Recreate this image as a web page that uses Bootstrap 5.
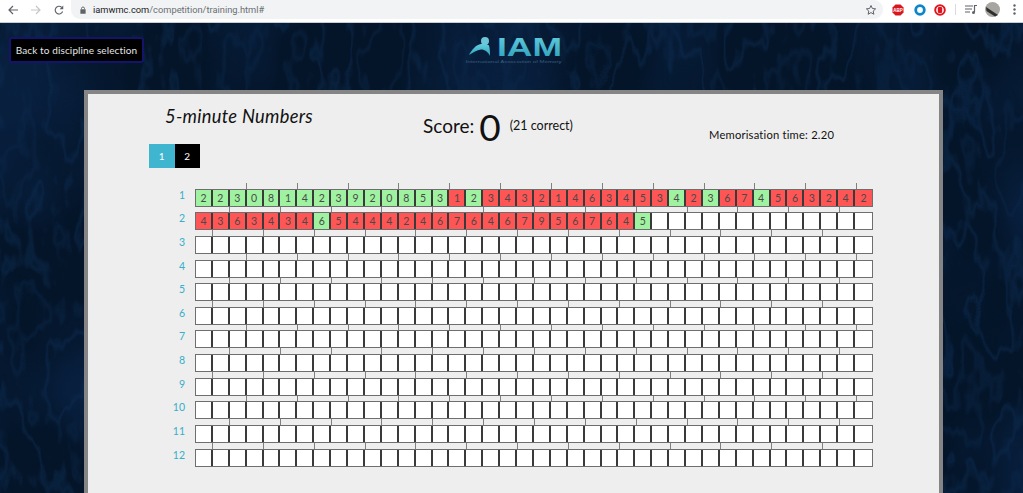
<!DOCTYPE html>
<html lang="en">
<head>
<meta charset="UTF-8">
<meta name="viewport" content="width=device-width, initial-scale=1.0">
<title>5-minute Numbers</title>
<link href="https://cdn.jsdelivr.net/npm/bootstrap@5.3.0/dist/css/bootstrap.min.css" rel="stylesheet">
<style>
  html, body { height: 100%; overflow: hidden; }
  body {
    font-family: "Lato", "Noto Sans", sans-serif;
    background-color: #041529;
    color: #111;
  }

  /* browser toolbar */
  .chrome-bar { height: 23px; background: #fff; border-bottom: 1px solid #c9ccd0; }
  .chrome-nav { width: 71px; height: 19px; flex: none; padding-left: 8px; gap: 13px; }
  .url-pill { width: 812px; flex: none; height: 19px; background: #f1f3f4; border-radius: 0 9px 9px 9px; font: 9.3px "Roboto", sans-serif; color: #6b6f73; padding: 0 6px 0 9px; }
  .url-host { color: #202124; }
  .lock-icon { margin-right: 7px; }
  .chrome-ext { height: 19px; flex: none; padding-left: 9px; }
  .ext-gap { margin-left: 10px; }
  .ext-sep { width: 1px; height: 11px; background: #d8dadd; margin: 0 9px 0 9px; }
  .ext-avatar { margin: 0 8px 0 8px; }
  .ext-dots { margin-left: 5px; }

  /* page */
  .site-bg {
    height: 470px;
    background-color: #041529;
    background-image: url("data:image/svg+xml;utf8,<svg xmlns='http://www.w3.org/2000/svg' width='1023' height='470'><filter id='b' x='0' y='0' width='100%' height='100%' color-interpolation-filters='sRGB'><feTurbulence type='fractalNoise' baseFrequency='0.007 0.005' numOctaves='3' seed='4'/><feColorMatrix values='0 0 0 0 0.035  0 0 0 0 0.13  0 0 0 0 0.26  3 0 0 0 -1.2'/></filter><filter id='v' x='0' y='0' width='100%' height='100%' color-interpolation-filters='sRGB'><feTurbulence type='fractalNoise' baseFrequency='0.022 0.009' numOctaves='4' seed='23'/><feColorMatrix values='0 0 0 0 0.05  0 0 0 0 0.17  0 0 0 0 0.31  1 0 0 0 0'/><feComponentTransfer><feFuncA type='table' tableValues='0 0 0 0 0 0 0 0 0 .55 0 0 0 .4 0 0 0 0 0 0 0'/></feComponentTransfer></filter><rect width='1023' height='470' filter='url(%23b)' opacity='.85'/><rect width='1023' height='470' filter='url(%23v)'/></svg>");
  }
  .site-head { position: relative; height: 67px; padding: 14px 0 0 9px; }
  .back-btn {
    width: 135px; height: 26px;
    background: #000; color: #e6e6e6;
    border: 2px solid #14146b; border-radius: 3px;
    font-size: 10px; letter-spacing: .12px; padding: 0;
  }
  .logo-box { position: absolute; left: 464px; top: 7px; width: 102px; height: 36px; }
  .logo-name { font: 700 25px/1 "Liberation Sans", sans-serif; }
  .logo-sub { font: 4px "Liberation Sans", sans-serif; fill: #3a5c7c; }

  .panel {
    width: 859px; height: 420px;
    margin-left: 84px;
    background: #eee;
    border: 4px solid #858585;
    border-bottom: 0;
  }
  .head-row { height: 50px; padding-left: 77px; }
  .task-title { font-style: italic; font-size: 18.3px; letter-spacing: .3px; margin: 12px 0 0 0; width: 258px; font-weight: 400; flex: none; }
  .score-box { width: 286px; flex: none; padding-top: 14px; }
  .score-word { font-size: 19px; }
  .score-num { font-size: 37px; line-height: 1; margin: 0 9px 0 5px; }
  .score-note { font-size: 12.5px; position: relative; top: 0; }
  .mem-time { font-size: 11.2px; margin-top: 33px; letter-spacing: .2px; }

  .sheet-tabs { margin-left: 61px; }
  .sheet-tab { width: 25.5px; height: 24px; font-size: 10px; color: #fff; line-height: 24px; text-align: center; }
  .tab-on { background: #3fb5cf; }
  .tab-off { background: #000; }

  .grid-wrap { margin: 15px 0 0 82px; width: 708px; }
  .grid-row { height: 18px; }
  .row-label { width: 25px; padding-right: 10px; font-size: 10.5px; color: #36afc9; text-align: right; line-height: 13px; }
  .cell-line { width: 678px; height: 18px; display: grid; grid-template-columns: repeat(40, 1fr); border: 1px solid #6e6e6e; background: #fff; }
  .digit { border-right: 2px solid #3a3a3a; font-size: 10.5px; color: #4a4a4a; text-align: center; line-height: 16px; height: 16px; }
  .digit:last-child { border-right: 0; }
  .ok { background: #9ff29f; }
  .bad { background: #ff5555; }
  .tick-line { width: 678px; margin-left: 25px; height: 5.64px; display: grid; grid-template-columns: repeat(40, 1fr); }
  .tick-mark { border-left: 1px solid #808080; }
</style>
</head>
<body>

<!-- Browser toolbar -->
<div class="chrome-bar d-flex align-items-start">
  <div class="chrome-nav d-flex align-items-center">
    <svg width="10" height="10" viewBox="0 0 10 10"><path d="M10 5H1M5 1 1 5l4 4" fill="none" stroke="#5f6368" stroke-width="1.200"/></svg>
    <svg width="10" height="10" viewBox="0 0 10 10"><path d="M0 5h9M5 1l4 4-4 4" fill="none" stroke="#c4c7ca" stroke-width="1.200"/></svg>
    <svg width="10" height="10" viewBox="0 0 13 13"><path d="M11.200 8.500A5 5 0 1 1 10 3" fill="none" stroke="#5f6368" stroke-width="1.500"/><path d="M12 .8v4.700H7.300z" fill="#5f6368"/></svg>
  </div>
  <div class="url-pill d-flex align-items-center">
    <svg class="lock-icon" width="6" height="8" viewBox="0 0 8 10"><path d="M2 4V3a2 2 0 0 1 4 0v1" fill="none" stroke="#5f6368" stroke-width="1.200"/><rect x="0.500" y="4" width="7" height="6" fill="#5f6368"/></svg>
    <span><span class="url-host">iamwmc.com</span>/competition/training.html#</span>
    <svg class="ms-auto" width="12" height="12" viewBox="0 0 24 24"><path d="M12 3l2.800 6 6.500.7-4.900 4.400 1.400 6.400L12 17.200 6.200 20.500l1.400-6.400L2.700 9.700 9.200 9z" fill="none" stroke="#5f6368" stroke-width="2"/></svg>
  </div>
  <div class="chrome-ext d-flex align-items-center">
    <svg width="12" height="12" viewBox="0 0 12 12"><path d="M3.500.5h5l3 3v5l-3 3h-5l-3-3v-5z" fill="#d9151d"/><text x="6" y="7.500" font-size="4.500" font-weight="700" text-anchor="middle" fill="#fff" font-family="Liberation Sans">ABP</text></svg>
    <svg class="ext-gap" width="12" height="12" viewBox="0 0 12 12"><circle cx="6" cy="6" r="4.300" fill="none" stroke="#0b86c9" stroke-width="2.800"/></svg>
    <svg class="ms-2" width="12" height="12" viewBox="0 0 12 12"><circle cx="6" cy="6" r="4.800" fill="#fff" stroke="#e0141c" stroke-width="2"/><rect x="3.800" y="3" width="4.400" height="6" rx="1.200" fill="#e0141c"/></svg>
    <div class="ext-sep"></div>
    <svg width="12" height="11" viewBox="0 0 12 11"><path d="M0 2h8M0 5h7M0 8h5" stroke="#5f6368" stroke-width="1.200"/><path d="M9.500 8V1.500H12" fill="none" stroke="#5f6368" stroke-width="1.200"/><circle cx="8.500" cy="8.500" r="1.500" fill="#5f6368"/></svg>
    <svg class="ext-avatar" width="15" height="15" viewBox="0 0 15 15"><circle cx="7.500" cy="7.500" r="7.500" fill="#a8a6a0"/><path d="M1 5l12 8-3 1.500L1.500 9z" fill="#2e2e2e"/></svg>
    <svg class="ext-dots" width="3" height="11" viewBox="0 0 3 11"><circle cx="1.500" cy="1.500" r="1.200" fill="#5f6368"/><circle cx="1.500" cy="5.500" r="1.200" fill="#5f6368"/><circle cx="1.500" cy="9.500" r="1.200" fill="#5f6368"/></svg>
  </div>
</div>

<div class="site-bg">
  <!-- Header -->
  <div class="site-head">
    <button class="back-btn d-block" type="button">Back to discipline selection</button>
    <svg class="logo-box" viewBox="0 -6 102 36">
      <defs>
        <linearGradient id="logoFill" x1="0" y1="0" x2="0" y2="1">
          <stop offset="0" stop-color="#66cfe0"/>
          <stop offset="1" stop-color="#2b9fba"/>
        </linearGradient>
      </defs>
      <circle cx="21" cy="5" r="4" fill="#6cc6d8"/>
      <path d="M5 19C8 13 12 9 17 8c3-.5 6 0 8 1.500.8 3 1.200 6.500 1 10.500-2-4-5-6.500-9-6.500-4 .5-8 3-12 5.500z" fill="url(#logoFill)"/>
      <text class="logo-name" x="33" y="20" textLength="65" lengthAdjust="spacingAndGlyphs" fill="url(#logoFill)">IAM</text>
      <text class="logo-sub" x="1.500" y="26.500" textLength="96" lengthAdjust="spacingAndGlyphs">International Association of Memory</text>
    </svg>
  </div>

  <!-- Results panel -->
  <div class="panel">
    <div class="head-row d-flex">
      <h1 class="task-title">5-minute Numbers</h1>
      <div class="score-box d-flex align-items-center align-self-start">
        <span class="score-word">Score:</span>
        <span class="score-num">0</span>
        <span class="score-note">(21 correct)</span>
      </div>
      <div class="mem-time">Memorisation time: 2.20</div>
    </div>

    <div class="sheet-tabs d-flex">
      <div class="sheet-tab tab-on">1</div>
      <div class="sheet-tab tab-off">2</div>
    </div>

    <div class="grid-wrap" id="grid"></div>
  </div>
</div>

<script>
  const rows = [
    "2230814239208531234321463453423674563242",
    "436343465444246764679567645"
  ];
  // indexes of the recalled digits that were right
  const correct = [
    [0,1,2,3,4,5,6,7,8,9,10,11,12,13,14,16,28,30,33],
    [7,26]
  ];

  let html = "";
  for (let r = 0; r < 12; r++) {
    let ticks = "";
    for (let c = 0; c < 40; c++) {
      // groups of three digits run on from one row to the next
      const mark = (r * 40 + c) % 3 === 0 && c > 0;
      ticks += `<div class="${mark ? "tick-mark" : ""}"></div>`;
    }
    html += `<div class="tick-line">${ticks}</div>`;

    let cells = "";
    const digits = rows[r] || "";
    for (let c = 0; c < 40; c++) {
      let cls = "digit";
      if (c < digits.length) {
        cls += (correct[r] || []).includes(c) ? " ok" : " bad";
      }
      cells += `<div class="${cls}">${digits[c] || ""}</div>`;
    }
    html += `<div class="grid-row d-flex"><div class="row-label">${r + 1}</div><div class="cell-line">${cells}</div></div>`;
  }
  document.getElementById("grid").innerHTML = html;
</script>
<script src="https://cdn.jsdelivr.net/npm/bootstrap@5.3.0/dist/js/bootstrap.bundle.min.js"></script>
</body>
</html>
